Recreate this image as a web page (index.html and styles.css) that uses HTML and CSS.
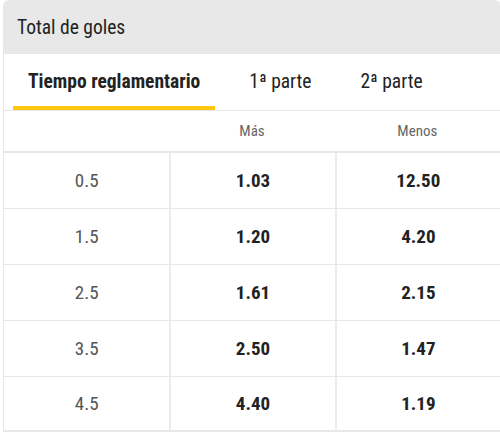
FILE: index.html
```html
<!DOCTYPE html>
<html lang="es">
<head>
<meta charset="utf-8">
<link rel="stylesheet" href="styles.css">
</head>
<body>
<div class="card">
  <div class="card-header">Total de goles</div>
  <div class="tabs">
    <div class="tab active">Tiempo reglamentario</div>
    <div class="tab">1ª parte</div>
    <div class="tab">2ª parte</div>
  </div>
  <div class="table">
    <div class="row head">
      <div class="cell"></div>
      <div class="cell">Más</div>
      <div class="cell">Menos</div>
    </div>
    <div class="row">
      <div class="cell line">0.5</div>
      <div class="cell odd">1.03</div>
      <div class="cell odd">12.50</div>
    </div>
    <div class="row">
      <div class="cell line">1.5</div>
      <div class="cell odd">1.20</div>
      <div class="cell odd">4.20</div>
    </div>
    <div class="row">
      <div class="cell line">2.5</div>
      <div class="cell odd">1.61</div>
      <div class="cell odd">2.15</div>
    </div>
    <div class="row">
      <div class="cell line">3.5</div>
      <div class="cell odd">2.50</div>
      <div class="cell odd">1.47</div>
    </div>
    <div class="row">
      <div class="cell line">4.5</div>
      <div class="cell odd">4.40</div>
      <div class="cell odd">1.19</div>
    </div>
  </div>
</div>
</body>
</html>
```
FILE: styles.css
```css
html, body {
  margin: 0;
  padding: 0;
  background: #fff;
}
body {
  font-family: Roboto, "Liberation Sans", sans-serif;
  font-stretch: 80%;
  color: #222;
  padding-left: 3px;
}
.card {
  width: 496px;
  border: 1px solid #e6e6e6;
  border-top: none;
  border-bottom: none;
  border-radius: 6px 6px 0 0;
}
.card-header {
  background: #e8e8e8;
  height: 54px;
  box-sizing: border-box;
  padding: 17px 13px 0;
  font-size: 19.5px;
  line-height: 22px;
  color: #222;
  border-radius: 6px 6px 0 0;
}
.tabs {
  display: flex;
  padding-left: 9px;
  height: 57px;
  border-bottom: 1px solid #e6e6e6;
  box-sizing: border-box;
}
.tab {
  padding: 17px 15px 0;
  font-size: 19.5px;
  line-height: 22px;
  color: #222;
  box-sizing: border-box;
  height: 56px;
  margin-right: 19px;
}
.tab.active {
  font-weight: 700;
  border-bottom: 4px solid #fdc70f;
}
.row {
  display: grid;
  grid-template-columns: 1fr 1fr 1fr;
  height: 56px;
  border-bottom: 1px solid #e8e8e8;
  box-sizing: border-box;
}
.row:last-child {
  height: 55px;
  border-bottom-width: 2px;
}
.row.head {
  height: 42px;
  border-bottom-width: 2px;
}
.row.head .cell {
  font-size: 15px;
  color: #666;
}
.cell {
  display: flex;
  align-items: center;
  justify-content: center;
  font-size: 19px;
}
.row:not(.head) .cell + .cell {
  border-left: 2px solid #ececec;
}
.line {
  color: #555;
}
.odd {
  font-weight: 700;
  color: #222;
}
```
